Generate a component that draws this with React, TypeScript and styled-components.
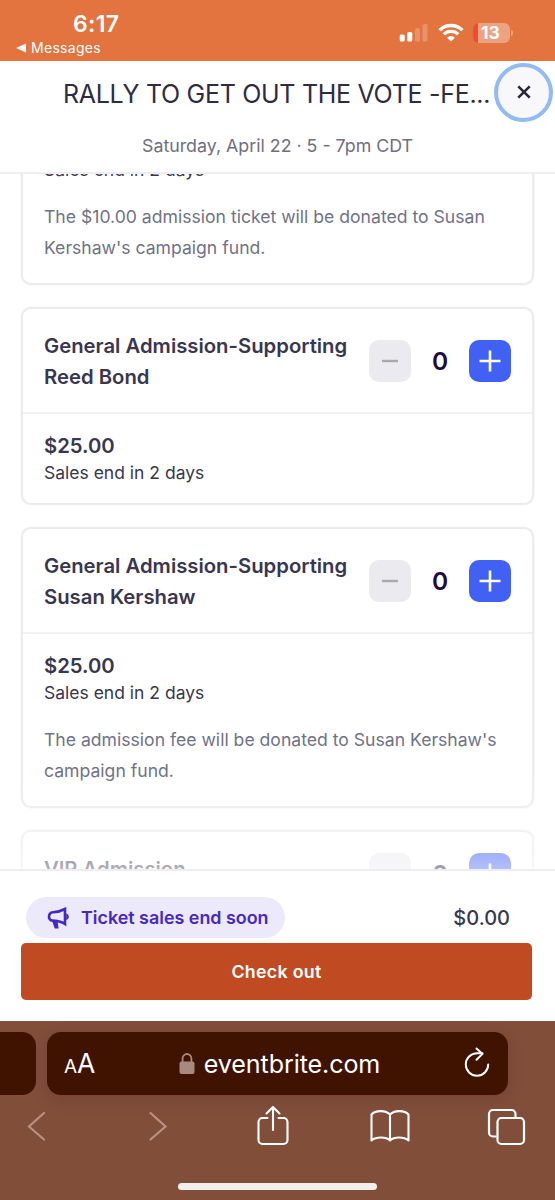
import React from "react";
import styled, { createGlobalStyle } from "styled-components";

const GlobalStyle = createGlobalStyle`
  *, *::before, *::after { box-sizing: border-box; }
  body { margin: 0; background: #fff; font-family: Inter, "Liberation Sans", sans-serif; }
  button { font: inherit; border: 0; padding: 0; margin: 0; }
  svg { display: block; flex: none; }
  h1, h2, p { margin: 0; }
`;

const Screen = styled.div`
  width: 555px;
  height: 1200px;
  display: flex;
  flex-direction: column;
  overflow: hidden;
  background: #fff;
`;

const StatusBar = styled.div`
  height: 61px;
  flex: none;
  display: flex;
  justify-content: space-between;
  background: #e3733f;
  color: #fff;
`;

const StatusLeft = styled.div`
  padding: 10px 0 0 16px;
`;

const Clock = styled.div`
  padding-left: 57px;
  font-size: 23px;
  line-height: 28px;
  font-weight: 600;
  letter-spacing: 0.3px;
`;

const BackLink = styled.div`
  display: flex;
  align-items: center;
  gap: 5px;
  font-size: 14px;
  line-height: 20px;
  letter-spacing: 0.3px;
`;

const StatusIcons = styled.div`
  display: flex;
  align-items: flex-start;
  padding: 23px 42px 0 0;
`;

const Header = styled.header`
  height: 113px;
  flex: none;
  display: flex;
  flex-direction: column;
  border-bottom: 2px solid #eeedf2;
`;

const TitleRow = styled.div`
  height: 65px;
  padding: 1px 2px 0 63px;
  display: flex;
  align-items: center;
  justify-content: space-between;
`;

const Title = styled.h1`
  font-size: 25px;
  line-height: 32px;
  font-weight: 400;
  letter-spacing: -0.3px;
  white-space: nowrap;
  color: #2f2c42;
`;

const CloseButton = styled.button`
  width: 59px;
  height: 59px;
  margin-bottom: 4px;
  flex: none;
  display: flex;
  align-items: center;
  justify-content: center;
  border: 4px solid #91bbf3;
  border-radius: 50%;
  background: #f8f7fa;
`;

const EventDate = styled.p`
  padding-top: 7px;
  text-align: center;
  font-size: 17.8px;
  line-height: 26px;
  color: #706e80;
`;

const TicketScroller = styled.main`
  position: relative;
  height: 695px;
  flex: none;
  overflow: hidden;
`;

const TicketList = styled.div`
  display: flex;
  flex-direction: column;
  gap: 22px;
  padding: 0 21px;
  margin-top: -65px;
`;

const Fade = styled.div`
  position: absolute;
  left: 0;
  right: 0;
  bottom: 0;
  height: 95px;
  background: linear-gradient(rgba(255, 255, 255, 0), rgba(255, 255, 255, 0.6));
`;

const Card = styled.section`
  flex: none;
  border: 2px solid #ebeaef;
  border-radius: 10px;
  box-shadow: 0 0 0 0.5px #f3f2f6;
`;

const CardHead = styled.div`
  display: flex;
  align-items: center;
  justify-content: space-between;
  padding: 21px 21px 20px;
  border-bottom: 2px solid #f1f0f4;
`;

const TicketName = styled.h2`
  align-self: flex-start;
  max-width: 312px;
  font-size: 20.3px;
  line-height: 31px;
  font-weight: 600;
  color: #39364f;
  white-space: pre-line;
`;

const Stepper = styled.div`
  display: flex;
  align-items: center;
  flex: none;
`;

const StepButton = styled.button<{ $active?: boolean }>`
  width: 42px;
  height: 42px;
  display: flex;
  align-items: center;
  justify-content: center;
  border-radius: 10px;
  background: ${(p) => (p.$active ? "#4161f5" : "#ebeaef")};
  color: ${(p) => (p.$active ? "#fff" : "#a9a8b2")};
`;

const Count = styled.span`
  width: 58px;
  text-align: center;
  font-size: 24.5px;
  line-height: 42px;
  font-weight: 600;
  color: #1e0a3c;
`;

const CardBody = styled.div<{ $roomy?: boolean }>`
  padding: 16px 21px ${(p) => (p.$roomy ? 20 : 19)}px;
`;

const Price = styled.p`
  font-size: 20.3px;
  line-height: 31px;
  font-weight: 600;
  color: #39364f;
`;

const SalesEnd = styled.p`
  font-size: 17.5px;
  line-height: 23px;
  color: #39364f;
`;

const Description = styled.p`
  margin-top: 20px;
  font-size: 17.6px;
  line-height: 31px;
  color: #6f7287;
  white-space: pre-line;
`;

const Footer = styled.footer`
  height: 152px;
  flex: none;
  padding: 26px 23px 0 21px;
  border-top: 2px solid #eeedf2;
`;

const SummaryRow = styled.div`
  display: flex;
  align-items: center;
  justify-content: space-between;
  padding: 0 22px 0 5px;
`;

const Pill = styled.div`
  height: 41px;
  width: 259px;
  display: flex;
  align-items: center;
  gap: 12px;
  padding-left: 21px;
  border-radius: 21px;
  background: #ece9fa;
  color: #4728c0;
  font-size: 17.9px;
  font-weight: 600;
  white-space: nowrap;
`;

const Total = styled.div`
  font-size: 20px;
  font-weight: 500;
  color: #39364f;
`;

const CheckoutButton = styled.button`
  width: 100%;
  height: 57px;
  margin-top: 5px;
  display: block;
  border-radius: 5px;
  background: #c04a22;
  color: #fff;
  font-size: 17.8px;
  font-weight: 600;
  letter-spacing: 0.3px;
`;

const Browser = styled.nav`
  height: 179px;
  flex: none;
  display: flex;
  flex-direction: column;
  background: #814e3a;
  color: #fff;
`;

const TabStrip = styled.div`
  display: flex;
  gap: 11px;
  padding-top: 11px;
`;

const PreviousTab = styled.div`
  width: 36px;
  height: 63px;
  border-radius: 0 14px 14px 0;
  background: #401300;
`;

const AddressBar = styled.div`
  width: 461px;
  height: 63px;
  display: flex;
  align-items: center;
  justify-content: space-between;
  padding: 0 18px 0 17px;
  border-radius: 14px;
  background: #401300;
  box-shadow: 0 4px 16px rgba(64, 19, 0, 0.16);
`;

const TextSize = styled.div`
  width: 34px;
  padding-top: 3px;
  font-size: 26.5px;
  line-height: 32px;
  white-space: nowrap;
`;

const SmallA = styled.span`
  font-size: 19px;
`;

const Address = styled.div`
  display: flex;
  align-items: center;
  gap: 9px;
  padding-right: 3px;
  font-size: 25.1px;
  letter-spacing: -0.1px;
`;

const Toolbar = styled.div`
  height: 105px;
  display: flex;
  justify-content: space-between;
  padding: 10px 28px 0 18px;
`;

const HomeIndicator = styled.div`
  position: absolute;
  left: 178px;
  top: 1183px;
  width: 199px;
  height: 7px;
  border-radius: 4px;
  background: #f1efee;
`;

const Signal = () => (
  <svg width="30" height="19" viewBox="0 0 30 19" fill="#fff">
    <rect x="0.7" y="11.5" width="5" height="7" rx="1.5" />
    <rect x="8.3" y="9" width="5" height="9.5" rx="1.5" />
    <rect x="16" y="5" width="5" height="13.5" rx="1.5" opacity=".22" />
    <rect x="23.5" y="1" width="5" height="17.5" rx="1.5" opacity=".22" />
  </svg>
);

const Wifi = () => (
  <svg width="26" height="19" viewBox="0 0 26 19" fill="none" stroke="#fff" strokeWidth="3.4">
    <path d="M1.7 7.2a16 16 0 0 1 22.6 0" />
    <path d="M5.8 11.4a10.2 10.2 0 0 1 14.4 0" />
    <path d="M9.1 14.7a5.5 5.5 0 0 1 7.8 0L13 18.6z" fill="#fff" stroke="none" />
  </svg>
);

const BatteryBox = styled.div`
  display: flex;
  align-items: center;
  gap: 1px;
  margin-left: 9px;
`;

const BatteryBody = styled.div`
  width: 37px;
  height: 20px;
  padding-right: 2px;
  border-radius: 6px;
  background: linear-gradient(90deg, #ec4c38 0 5px, #eda281 5px);
  text-align: center;
  font-size: 17.5px;
  line-height: 20px;
  font-weight: 700;
`;

const BatteryTip = styled.div`
  width: 2px;
  height: 6px;
  border-radius: 0 3px 3px 0;
  background: #eda281;
`;

const WifiSlot = styled.div`
  padding-left: 9px;
`;

const Minus = () => (
  <svg width="42" height="42" viewBox="0 0 42 42" stroke="currentColor" strokeWidth="2.4">
    <path d="M13 21H29" />
  </svg>
);

const Plus = () => (
  <svg width="42" height="42" viewBox="0 0 42 42" stroke="currentColor" strokeWidth="2.6">
    <path d="M10.5 21H31.5M21 10.5V31.5" />
  </svg>
);

const Megaphone = () => (
  <svg width="22" height="22" viewBox="0 0 22 22" fill="none" stroke="currentColor" strokeWidth="2.6">
    <path d="M18 2V17C13.8 14.2 10 13.6 5.4 13.6C3.2 13.6 2 11.8 2 9.8C2 7.3 3.4 5.4 6 5.2C10.5 5 14 4.2 18 2Z" />
    <path d="M6.4 13.8L8.6 20.3H10.2L9.2 14" strokeWidth="2.5" />
    <path d="M19.2 6.6V13C21 12.4 21.8 11.2 21.8 9.8C21.8 8.4 21 7.200 19.200 6.600Z" fill="currentColor" stroke="none" />
  </svg>
);

type Ticket = { name?: string; price: string; description?: string };

const tickets: Ticket[] = [
  { price: "$10.00", description: "The $10.00 admission ticket will be donated to Susan\nKershaw's campaign fund." },
  { name: "General Admission-Supporting\nReed Bond", price: "$25.00" },
  {
    name: "General Admission-Supporting\nSusan Kershaw",
    price: "$25.00",
    description: "The admission fee will be donated to Susan Kershaw's\ncampaign fund.",
  },
];

const Quantity = () => (
  <Stepper>
    <StepButton aria-label="Decrease"><Minus /></StepButton>
    <Count>0</Count>
    <StepButton $active aria-label="Increase"><Plus /></StepButton>
  </Stepper>
);

export default function App() {
  return (
    <Screen>
      <GlobalStyle />
      <StatusBar>
        <StatusLeft>
          <Clock>6:17</Clock>
          <BackLink>
            <svg width="10" height="10" viewBox="0 0 10 10" fill="#fff"><path d="M0 5L10 .5V9.5Z" /></svg>
            Messages
          </BackLink>
        </StatusLeft>
        <StatusIcons>
          <Signal />
          <WifiSlot><Wifi /></WifiSlot>
          <BatteryBox>
            <BatteryBody>13</BatteryBody>
            <BatteryTip />
          </BatteryBox>
        </StatusIcons>
      </StatusBar>

      <Header>
        <TitleRow>
          <Title>RALLY TO GET OUT THE VOTE -FE...</Title>
          <CloseButton aria-label="Close">
            <svg width="14" height="14" viewBox="0 0 14 14" stroke="#2b2540" strokeWidth="2.6">
              <path d="M1.3 1.3L12.7 12.7M12.7 1.3L1.3 12.7" />
            </svg>
          </CloseButton>
        </TitleRow>
        <EventDate>Saturday, April 22 · 5 - 7pm CDT</EventDate>
      </Header>

      <TicketScroller>
        <TicketList>
          {tickets.map((t, i) => (
            <Card key={i}>
              {t.name && (
                <CardHead>
                  <TicketName>{t.name}</TicketName>
                  <Quantity />
                </CardHead>
              )}
              <CardBody $roomy={!!t.description}>
                <Price>{t.price}</Price>
                <SalesEnd>Sales end in 2 days</SalesEnd>
                {t.description && <Description>{t.description}</Description>}
              </CardBody>
            </Card>
          ))}
          <Card>
            <CardHead>
              <TicketName>VIP Admission</TicketName>
              <Quantity />
            </CardHead>
          </Card>
        </TicketList>
        <Fade />
      </TicketScroller>

      <Footer>
        <SummaryRow>
          <Pill><Megaphone />Ticket sales end soon</Pill>
          <Total>$0.00</Total>
        </SummaryRow>
        <CheckoutButton>Check out</CheckoutButton>
      </Footer>

      <Browser>
        <TabStrip>
          <PreviousTab />
          <AddressBar>
            <TextSize><SmallA>A</SmallA>A</TextSize>
            <Address>
              <svg width="16" height="22" viewBox="0 0 16 22">
                <rect x="0.5" y="8.5" width="15" height="12.5" rx="2" fill="#a68a80" />
                <path d="M3.6 10V5.4a4.4 4.4 0 0 1 8.8 0V10" fill="none" stroke="#a68a80" strokeWidth="1.8" />
              </svg>
              eventbrite.com
            </Address>
            <svg width="26" height="34" viewBox="0 0 26 34" fill="none" stroke="#fff" strokeWidth="2" strokeLinecap="round" strokeLinejoin="round">
              <path d="M24.2 17.5A11.2 11.2 0 1 1 13 6.3H18.5" />
              <path d="M12.5 1.5L18.5 6.9L12.5 12.7" />
            </svg>
          </AddressBar>
        </TabStrip>
        <Toolbar>
          <svg width="40" height="42" viewBox="0 0 40 42" fill="none" stroke="#b8927f" strokeWidth="2.2" strokeLinecap="round">
            <path d="M26 8L11 21.5L26 34.5" />
          </svg>
          <svg width="40" height="42" viewBox="0 0 40 42" fill="none" stroke="#b8927f" strokeWidth="2.2" strokeLinecap="round">
            <path d="M15.5 8L30.5 21.5L15.5 34.5" />
          </svg>
          <svg width="40" height="42" viewBox="-4 0 40 42" fill="none" stroke="#fff" strokeWidth="2.1" strokeLinecap="round" strokeLinejoin="round">
            <path d="M10.5 13H5.5a4 4 0 0 0-4 4V35a4 4 0 0 0 4 4H26.5a4 4 0 0 0 4-4V17a4 4 0 0 0-4-4H21.5" />
            <path d="M16 25V2.5M9.5 8.5L16 2L22.5 8.5" />
          </svg>
          <svg width="40" height="42" viewBox="0 0 40 42" fill="none" stroke="#fff" strokeWidth="2.1" strokeLinejoin="round">
            <path d="M20 9.5C16 5.5 6 4.5 1.5 9.5V35.5C6 31.5 16 31.5 20 35.5C24 31.5 34 31.5 38.5 35.5V9.5C34 4.5 24 5.5 20 9.5ZM20 9.5V35" />
          </svg>
          <svg width="40" height="42" viewBox="-0.5 0 40 42" fill="none" stroke="#fff" strokeWidth="2.2">
            <path d="M9 31.5H5.5a4 4 0 0 1-4-4V9a4 4 0 0 1 4-4H24a4 4 0 0 1 4 4V12.5" />
            <rect x="10" y="13" width="26.5" height="26" rx="4" />
          </svg>
        </Toolbar>
        <HomeIndicator />
      </Browser>
    </Screen>
  );
}
